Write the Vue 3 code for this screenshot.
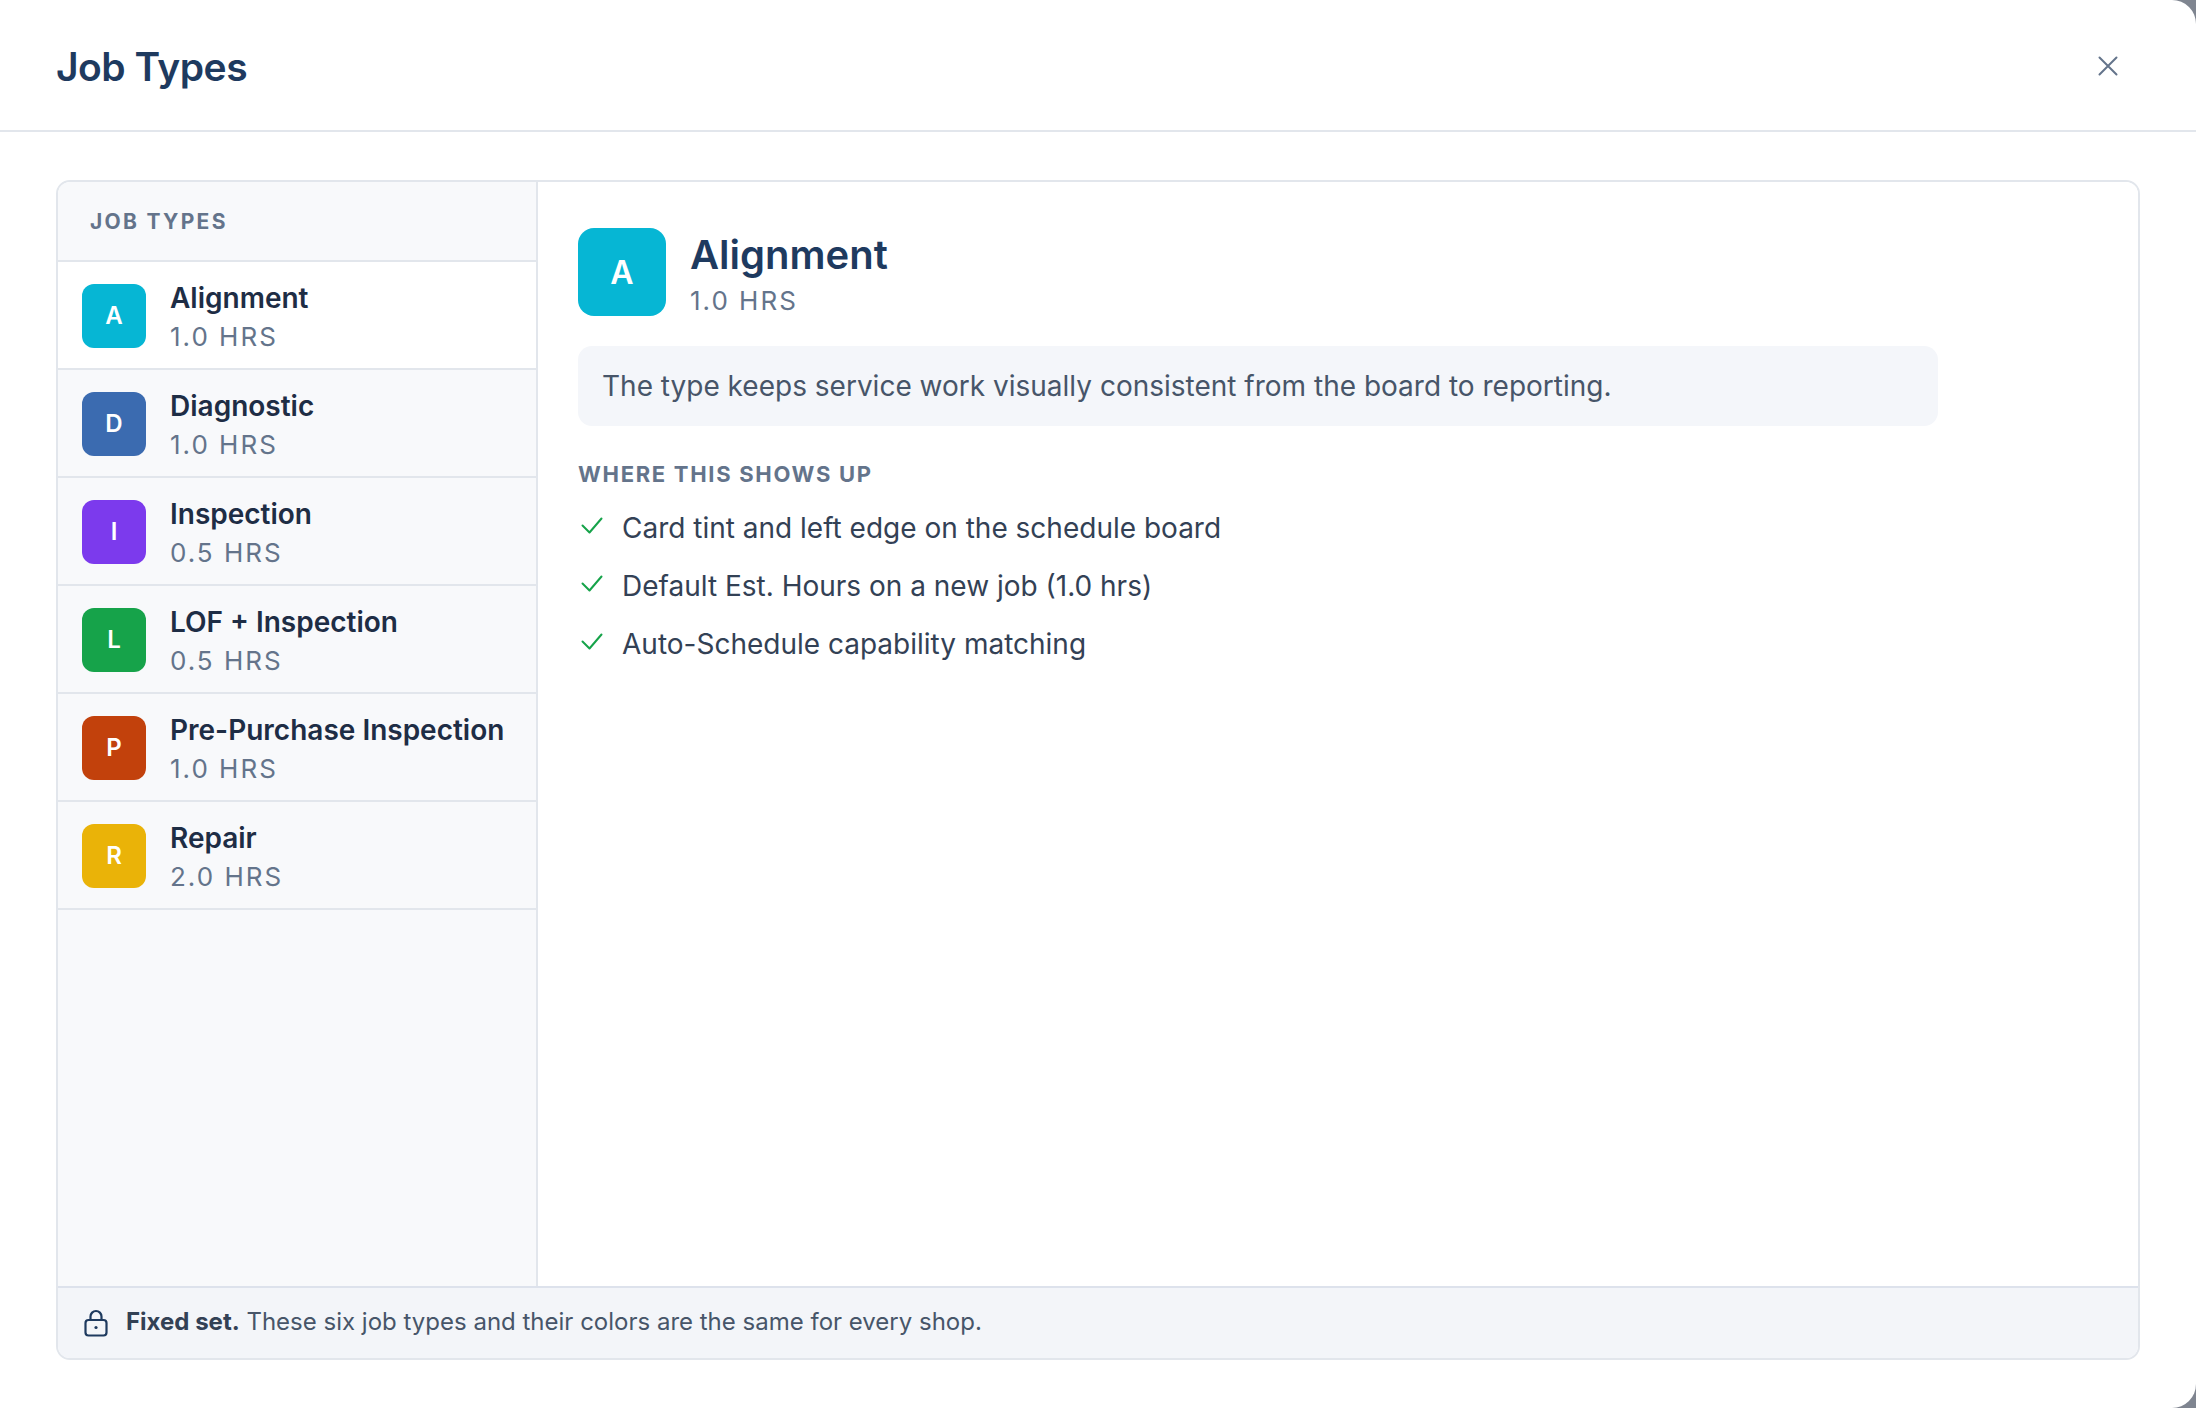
<script setup>
import { ref, computed } from 'vue'

const jobTypes = [
  { name: 'Alignment', hours: '1.0 HRS', color: '#06b6d4' },
  { name: 'Diagnostic', hours: '1.0 HRS', color: '#3b6bb0' },
  { name: 'Inspection', hours: '0.5 HRS', color: '#7c3aed' },
  { name: 'LOF + Inspection', hours: '0.5 HRS', color: '#16a34a' },
  { name: 'Pre-Purchase Inspection', hours: '1.0 HRS', color: '#c2410c' },
  { name: 'Repair', hours: '2.0 HRS', color: '#eab308' }
]

const usages = [
  'Card tint and left edge on the schedule board',
  'Default Est. Hours on a new job (1.0 hrs)',
  'Auto-Schedule capability matching'
]

const selected = ref(0)
const current = computed(() => jobTypes[selected.value])
</script>

<template>
  <div class="modal">
    <header class="modal-header">
      <h1 class="modal-title">Job Types</h1>
      <button class="modal-close" aria-label="Close">
        <svg viewBox="0 0 20 20" width="20" height="20" fill="none" stroke="currentColor" stroke-width="2" stroke-linecap="round">
          <path d="M1.5 1.5l17 17M18.5 1.5l-17 17" />
        </svg>
      </button>
    </header>

    <div class="modal-body">
      <div class="panel">
        <div class="panel-main">
          <aside class="sidebar">
            <div class="sidebar-title">JOB TYPES</div>
            <div
              v-for="(job, i) in jobTypes"
              :key="job.name"
              class="job-row"
              :class="{ active: i === selected }"
              @click="selected = i"
            >
              <span class="job-badge" :style="{ background: job.color }">{{ job.name[0] }}</span>
              <div class="job-text">
                <div class="job-name">{{ job.name }}</div>
                <div class="job-hours">{{ job.hours }}</div>
              </div>
            </div>
          </aside>

          <section class="detail">
            <div class="detail-head">
              <span class="detail-badge" :style="{ background: current.color }">{{ current.name[0] }}</span>
              <div class="detail-text">
                <h2 class="detail-name">{{ current.name }}</h2>
                <div class="detail-hours">{{ current.hours }}</div>
              </div>
            </div>
            <p class="detail-note">The type keeps service work visually consistent from the board to reporting.</p>
            <div class="detail-label">WHERE THIS SHOWS UP</div>
            <ul class="detail-list">
              <li v-for="usage in usages" :key="usage">
                <svg class="check" viewBox="0 0 22 18" width="22" height="18" fill="none" stroke="#16a34a" stroke-width="2" stroke-linecap="round" stroke-linejoin="round"><path d="M1.5 8.5l7 7L20.5 1.5" /></svg>
                {{ usage }}
              </li>
            </ul>
          </section>
        </div>

        <footer class="panel-footer">
          <svg viewBox="0 0 24 28" width="24" height="28" fill="none" stroke="#1e3a5f" stroke-width="2.2">
            <rect x="1.5" y="11" width="21" height="15.5" rx="3" />
            <path d="M6.5 11V7.5a5.5 5.5 0 0 1 11 0V11" />
            <circle cx="12" cy="18.5" r="1.6" fill="#1e3a5f" stroke="none" />
          </svg>
          <span class="footer-text"><strong>Fixed set.</strong> These six job types and their colors are the same for every shop.</span>
        </footer>
      </div>
    </div>
  </div>
</template>

<style>
html,
body {
  margin: 0;
  background: #7f8590;
}
</style>

<style scoped>
.modal {
  width: 2196px;
  height: 1408px;
  box-sizing: border-box;
  background: #fff;
  border-radius: 0 24px 24px 0;
  display: flex;
  flex-direction: column;
  font-family: Inter, sans-serif;
  overflow: hidden;
}

.modal-header {
  height: 132px;
  box-sizing: border-box;
  flex: none;
  border-bottom: 2px solid #e2e6ec;
  display: flex;
  align-items: center;
  justify-content: space-between;
  padding: 3px 78px 0 56px;
}

.modal-title {
  margin: 0;
  font-size: 39px;
  font-weight: 600;
  letter-spacing: -0.5px;
  color: #1e3a5f;
}

.modal-close {
  background: none;
  border: none;
  padding: 0 0 2px;
  color: #64748b;
  display: flex;
}

.modal-body {
  flex: 1;
  padding: 48px 56px;
  display: flex;
  min-height: 0;
}

.panel {
  flex: 1;
  border: 2px solid #e2e6ec;
  border-radius: 14px;
  overflow: hidden;
  display: flex;
  flex-direction: column;
}

.panel-main {
  flex: 1;
  display: flex;
  min-height: 0;
}

.sidebar {
  width: 478px;
  flex: none;
  background: #f8f9fb;
  border-right: 2px solid #e2e6ec;
}

.sidebar-title {
  height: 80px;
  box-sizing: border-box;
  border-bottom: 2px solid #e2e6ec;
  padding-left: 32px;
  display: flex;
  align-items: center;
  font-size: 21px;
  font-weight: 700;
  letter-spacing: 2.3px;
  color: #64748b;
}

.job-row {
  height: 108px;
  box-sizing: border-box;
  border-bottom: 2px solid #e2e6ec;
  display: flex;
  align-items: center;
  gap: 24px;
  padding-left: 24px;
  cursor: pointer;
}

.job-row.active {
  background: #fff;
}

.job-badge {
  width: 64px;
  height: 64px;
  box-sizing: border-box;
  flex: none;
  margin-top: 2px;
  padding-bottom: 2px;
  border-radius: 12px;
  color: #fff;
  font-size: 24px;
  font-weight: 600;
  display: flex;
  align-items: center;
  justify-content: center;
}

.job-text {
  padding-top: 3px;
}

.job-name {
  font-size: 28px;
  font-weight: 600;
  line-height: 38px;
  color: #1e2d45;
}

.job-hours {
  margin-top: 3px;
  font-size: 26px;
  line-height: 34px;
  letter-spacing: 2px;
  color: #64748b;
}

.detail {
  flex: 1;
  padding: 46px 40px;
  background: #fff;
}

.detail-head {
  height: 88px;
  display: flex;
  align-items: center;
  gap: 24px;
}

.detail-badge {
  width: 88px;
  height: 88px;
  flex: none;
  border-radius: 16px;
  color: #fff;
  font-size: 32px;
  font-weight: 600;
  display: flex;
  align-items: center;
  justify-content: center;
}

.detail-text {
  padding-top: 3px;
}

.detail-name {
  margin: 0;
  font-size: 40px;
  line-height: 50px;
  font-weight: 600;
  color: #1e3a5f;
}

.detail-hours {
  margin-top: 4px;
  font-size: 26px;
  line-height: 34px;
  letter-spacing: 2px;
  color: #64748b;
}

.detail-note {
  width: 1360px;
  box-sizing: border-box;
  height: 80px;
  margin: 30px 0 0;
  padding: 0 24px;
  display: flex;
  align-items: center;
  background: #f4f6fa;
  border-radius: 14px;
  font-size: 28px;
  color: #475569;
}

.detail-label {
  margin-top: 35px;
  font-size: 22px;
  font-weight: 700;
  letter-spacing: 1.7px;
  color: #64748b;
}

.detail-list {
  list-style: none;
  margin: 12px 0 0;
  padding: 0;
}

.detail-list li {
  height: 58px;
  display: flex;
  align-items: center;
  gap: 19px;
  font-size: 28px;
  color: #334155;
}

.check {
  margin: 0 0 5px 3px;
}

.panel-footer {
  height: 72px;
  flex: none;
  box-sizing: border-box;
  border-top: 2px solid #dde2ec;
  background: #f3f5f9;
  display: flex;
  align-items: center;
  gap: 18px;
  padding-left: 26px;
  font-size: 24px;
  color: #475569;
}

.footer-text {
  margin-bottom: 3px;
}

.panel-footer strong {
  font-weight: 700;
  color: #334155;
}
</style>
